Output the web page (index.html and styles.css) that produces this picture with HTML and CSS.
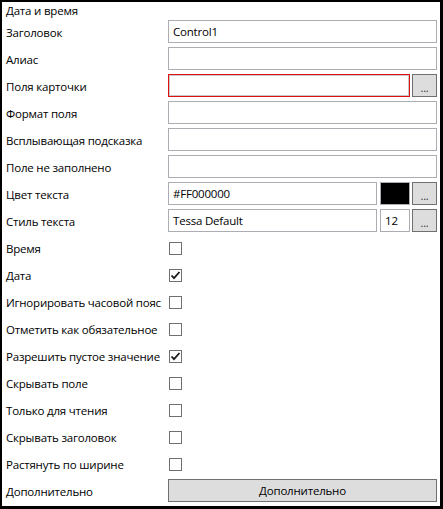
FILE: index.html
```html
<!DOCTYPE html>
<html lang="ru">
<head>
<meta charset="utf-8">
<title>Дата и время</title>
<link rel="stylesheet" href="styles.css">
</head>
<body>
<div class="panel">
  <div class="header">Дата и время</div>
  <div class="grid">
    <div class="label">Заголовок</div>
    <div class="field"><div class="textbox">Control1</div></div>

    <div class="label">Алиас</div>
    <div class="field"><div class="textbox"></div></div>

    <div class="label">Поля карточки</div>
    <div class="field"><div class="textbox invalid"></div><div class="dots">...</div></div>

    <div class="label">Формат поля</div>
    <div class="field"><div class="textbox"></div></div>

    <div class="label">Всплывающая подсказка</div>
    <div class="field"><div class="textbox"></div></div>

    <div class="label">Поле не заполнено</div>
    <div class="field"><div class="textbox"></div></div>

    <div class="label">Цвет текста</div>
    <div class="field"><div class="textbox">#FF000000</div><div class="swatch"></div><div class="dots">...</div></div>

    <div class="label">Стиль текста</div>
    <div class="field"><div class="textbox">Tessa Default</div><div class="size">12</div><div class="dots">...</div></div>

    <div class="label">Время</div>
    <div class="field"><div class="check"></div></div>

    <div class="label">Дата</div>
    <div class="field"><div class="check"><svg viewBox="0 0 11 11" width="11" height="11"><path d="M1.5 5.5 L4 8.2 L9.5 2" fill="none" stroke="#1a1a1a" stroke-width="1.8"/></svg></div></div>

    <div class="label">Игнорировать часовой пояс</div>
    <div class="field"><div class="check"></div></div>

    <div class="label">Отметить как обязательное</div>
    <div class="field"><div class="check"></div></div>

    <div class="label">Разрешить пустое значение</div>
    <div class="field"><div class="check"><svg viewBox="0 0 11 11" width="11" height="11"><path d="M1.5 5.5 L4 8.2 L9.5 2" fill="none" stroke="#1a1a1a" stroke-width="1.8"/></svg></div></div>

    <div class="label">Скрывать поле</div>
    <div class="field"><div class="check"></div></div>

    <div class="label">Только для чтения</div>
    <div class="field"><div class="check"></div></div>

    <div class="label">Скрывать заголовок</div>
    <div class="field"><div class="check"></div></div>

    <div class="label">Растянуть по ширине</div>
    <div class="field"><div class="check"></div></div>

    <div class="label">Дополнительно</div>
    <div class="field"><div class="button">Дополнительно</div></div>
  </div>
</div>
</body>
</html>
```
FILE: styles.css
```css
html, body {
  margin: 0;
  padding: 0;
  background: #ffffff;
}
body {
  font-family: "Open Sans", "Noto Sans", "Liberation Sans", sans-serif;
  font-size: 11.5px;
  letter-spacing: -0.2px;
  color: #000000;
}
.panel {
  width: 443px;
  height: 509px;
  box-sizing: border-box;
  border-style: solid;
  border-color: #000000;
  border-width: 2px 3px 3px 2px;
  padding: 0 3px 4px 4px;
  background: #ffffff;
}
.header {
  height: 18px;
  line-height: 18px;
  box-sizing: border-box;
}
.grid {
  display: grid;
  grid-template-columns: 162px 269px;
  grid-auto-rows: 23px;
  row-gap: 4px;
}
.label {
  display: flex;
  align-items: center;
  padding-top: 2px;
  box-sizing: border-box;
  white-space: nowrap;
}
.field {
  display: flex;
  align-items: center;
  height: 23px;
}
.textbox {
  flex: 1;
  height: 23px;
  box-sizing: border-box;
  border: 1px solid #abadb3;
  padding: 1px 4px 0;
  line-height: 20px;
  white-space: nowrap;
  overflow: hidden;
}
.textbox.invalid {
  border-color: #e01010;
  box-shadow: inset 0 0 0 1px #c8c8c8;
  margin-right: 1px;
}
.dots {
  width: 25px;
  height: 23px;
  box-sizing: border-box;
  margin-left: 1px;
  border: 1px solid #707070;
  background: #dddddd;
  color: #333333;
  font-size: 11px;
  text-align: center;
  line-height: 22px;
  padding-top: 2px;
}
.swatch {
  width: 30px;
  height: 23px;
  box-sizing: border-box;
  margin-left: 3px;
  border: 1px solid #abadb3;
  background: #000000;
}
.size {
  width: 30px;
  height: 23px;
  box-sizing: border-box;
  margin-left: 3px;
  border: 1px solid #abadb3;
  padding: 1px 4px 0;
  line-height: 20px;
}
.field .swatch + .dots,
.field .size + .dots {
  margin-left: 2px;
}
.check {
  width: 13px;
  height: 13px;
  box-sizing: border-box;
  margin-left: 1px;
  margin-top: 1px;
  border: 1px solid #707070;
  background: #ffffff;
  display: flex;
  align-items: center;
  justify-content: center;
}
.check svg {
  display: block;
}
.button {
  flex: 1;
  height: 23px;
  box-sizing: border-box;
  border: 1px solid #707070;
  background: #dddddd;
  text-align: center;
  line-height: 21px;
}
```
